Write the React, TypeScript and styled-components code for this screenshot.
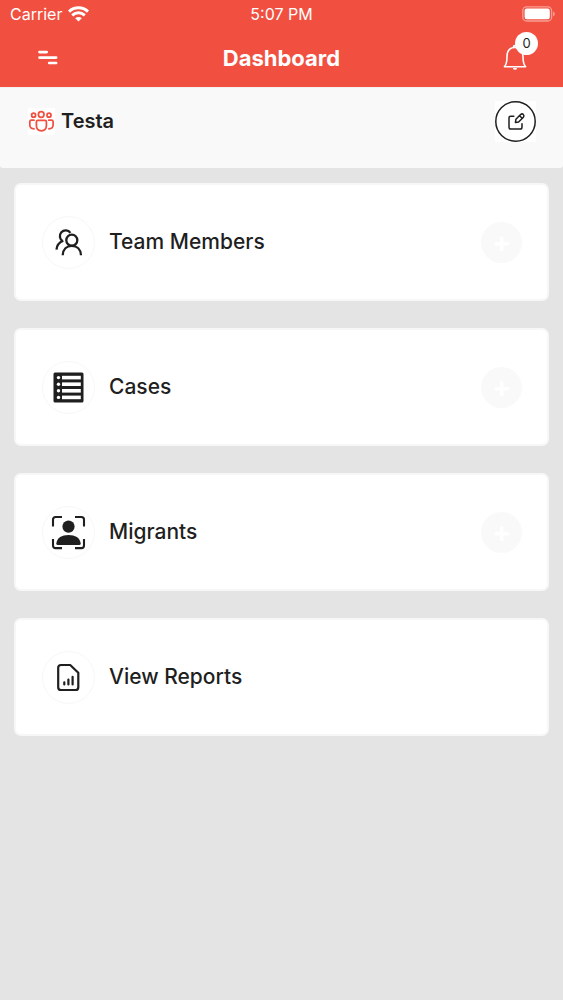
import React from "react";
import styled, { createGlobalStyle } from "styled-components";

const ink = "#1f1f1f";
const brand = "#f15040";

const GlobalStyle = createGlobalStyle`
  *, *::before, *::after { box-sizing: border-box; }
  body {
    margin: 0;
    background: #e4e4e4;
    color: ${ink};
    font-family: Inter, "Liberation Sans", sans-serif;
  }
  button { font: inherit; color: inherit; border: 0; padding: 0; background: none; cursor: pointer; }
  svg { display: block; }
`;

const Header = styled.header`
  background: ${brand};
  color: #fff;
`;

const StatusBar = styled.div`
  display: grid;
  grid-template-columns: 1fr auto 1fr;
  align-items: center;
  height: 28px;
  padding: 0 8px;
  font-size: 16px;
  line-height: 28px;
`;

const Carrier = styled.div`
  display: flex;
  align-items: center;
  gap: 6px;
  padding-left: 2px;
`;

const Battery = styled.div`
  display: flex;
  justify-content: flex-end;
`;

const NavBar = styled.nav`
  display: grid;
  grid-template-columns: 1fr auto 1fr;
  align-items: center;
  height: 59px;
  padding: 0 36px;
`;

const Title = styled.h1`
  margin: 0;
  font-size: 22px;
  line-height: 26px;
  font-weight: 700;
`;

const MenuButton = styled.button`
  width: 24px;
  height: 24px;
`;

const BellButton = styled.button`
  position: relative;
  justify-self: end;
  width: 24px;
  height: 28px;
`;

const Badge = styled.span`
  position: absolute;
  top: -12px;
  left: 12px;
  width: 23px;
  height: 23px;
  border-radius: 50%;
  background: #fff;
  color: ${ink};
  font-size: 13px;
  line-height: 23px;
  text-align: center;
`;

const TeamBar = styled.section`
  display: flex;
  align-items: flex-start;
  justify-content: space-between;
  padding: 13px 27px 26px 28px;
  background: #f9f9f9;
  border-top: 1px solid #f5f1f0;
  border-radius: 0 0 3px 3px;
`;

const TeamName = styled.div`
  display: flex;
  align-items: center;
  gap: 6px;
  height: 40px;
`;

const TeamIcon = styled.span`
  width: 27px;
  height: 27px;
  background: #fff;
`;

const TeamHeading = styled.h2`
  margin: 0;
  font-size: 20px;
  line-height: 28px;
  font-weight: 600;
`;

const EditButton = styled.button`
  width: 41px;
  height: 41px;
  background: #fff;
`;

const CardList = styled.main`
  display: flex;
  flex-direction: column;
  gap: 27px;
  padding: 15px 14px;
`;

const Card = styled.section`
  display: flex;
  align-items: center;
  gap: 14px;
  height: 118px;
  padding: 0 25px 0 26px;
  border: 2px solid #f7f7f7;
  border-radius: 7px;
  background: #fff;
`;

const IconCircle = styled.span`
  display: grid;
  place-items: center;
  flex: none;
  width: 53px;
  height: 53px;
  border: 1px solid #f7f7f7;
  border-radius: 50%;
`;

const CardTitle = styled.h3`
  flex: 1;
  margin: 0;
  font-size: 21px;
  line-height: 30px;
  font-weight: 500;
`;

const AddButton = styled.button`
  display: grid;
  place-items: center;
  flex: none;
  width: 41px;
  height: 41px;
  border-radius: 50%;
  background: #f9f9f9;
`;

const WifiIcon = () => (
  <svg width="21" height="16" viewBox="0 0 21 16" fill="none" stroke="#fff" strokeWidth="3" aria-hidden="true">
    <path d="M1 5.6C6.4.6 14.6.6 20 5.6" />
    <path d="M4.2 9.4C8 6 13 6 16.8 9.4" />
    <path d="M7.2 12.2C9 10.5 12 10.5 13.8 12.2L10.5 15.4Z" fill="#fff" stroke="none" />
  </svg>
);

const BatteryIcon = () => (
  <svg width="33" height="16" viewBox="0 0 33 16" aria-hidden="true">
    <rect x=".8" y=".8" width="28.8" height="14.2" rx="3.8" fill="none" stroke="#fff" strokeOpacity=".45" strokeWidth="1.3" />
    <rect x="2.6" y="2.6" width="25.2" height="10.6" rx="2.2" fill="#fff" />
    <path d="M31.2 5.6Q32.8 6.3 32.8 7.9T31.2 10.2Z" fill="#fff" fillOpacity=".5" />
  </svg>
);

const MenuIcon = () => (
  <svg width="24" height="24" viewBox="0 0 24 24" stroke="#fff" strokeWidth="2.7" strokeLinecap="round" aria-hidden="true">
    <path d="M3.5 6.1h7.2M3.5 11.6h16.6M13.2 17h6.9" />
  </svg>
);

const BellIcon = () => (
  <svg width="24" height="28" viewBox="0 0 24 28" fill="none" stroke="#fff" strokeWidth="1.6" strokeLinejoin="round" aria-hidden="true">
    <path d="M1.4 22.7C3.7 20.2 4 17.2 4 12.7C4 6.3 6.7 3.5 12 3.5S20 6.3 20 12.7C20 17.2 20.3 20.2 22.6 22.7Z" />
    <path d="M10.4 3.2a1.6 1.6 0 0 1 3.2 0" />
    <path d="M10 23.9h4a2 1.9 0 0 1-4 0Z" fill="#fff" stroke="none" />
  </svg>
);

const GroupIcon = () => (
  <svg width="27" height="27" viewBox="0 0 27 27" fill="none" stroke={brand} strokeWidth="1.75" strokeLinecap="round" strokeLinejoin="round" aria-hidden="true">
    <circle cx="13.2" cy="6.5" r="2.8" />
    <circle cx="5.6" cy="7.2" r="2" />
    <circle cx="21" cy="7.2" r="2" />
    <path d="M9.8 12.3H17A1.4 1.4 0 0 1 18.4 13.7V17.6C18.4 20.8 16.3 22.8 13.4 22.8S8.4 20.8 8.4 17.6V13.7A1.4 1.4 0 0 1 9.8 12.3Z" />
    <path d="M6 12.2H3.3Q1.8 12.2 1.8 13.7V17.2Q2 20.6 6 20.8M20.8 12.2H23.6Q25.1 12.2 25.1 13.7V17.2Q24.9 20.6 20.9 20.8" />
  </svg>
);

const EditIcon = () => (
  <svg width="41" height="41" viewBox="0 0 41 41" fill="none" stroke={ink} strokeWidth="1.5" strokeLinecap="round" strokeLinejoin="round" aria-hidden="true">
    <circle cx="20.5" cy="20.5" r="19.7" />
    <path d="M18.8 15.3H15.7Q14 15.3 14 17V26.2Q14 28 15.8 28H25.2Q27 28 27 26.2V22.7" />
    <path d="M20.4 21.5L20.9 18.3L25.6 13.5Q27.1 12.3 28.3 13.5T28.4 16.3L23.6 21Z" />
    <path d="M24.6 14.7L27.2 17.3" />
  </svg>
);

const MembersIcon = () => (
  <svg width="37" height="37" viewBox="0 0 37 37" fill="none" stroke={ink} strokeWidth="2.3" aria-hidden="true">
    <circle cx="21.8" cy="16.2" r="5.5" />
    <path d="M12.7 31.2C13 25.3 16.7 21.9 21.8 21.9S30.7 25.3 31 31.2" />
    <path d="M20.4 8.8A5.8 5.8 0 1 0 12.8 17.2M13.3 16.8Q7 19.2 6.5 25.6" />
  </svg>
);

const CasesIcon = () => (
  <svg width="37" height="37" viewBox="0 0 37 37" aria-hidden="true">
    <rect x="3.5" y="3.5" width="30" height="30" rx="1.5" fill={ink} />
    {[8.6, 15.2, 21.8, 28.4].map((y) => (
      <g key={y} fill="#fff">
        <circle cx="8.5" cy={y} r="1.7" />
        <rect x="12" y={y - 1.8} width="18.8" height="3.6" />
      </g>
    ))}
  </svg>
);

const MigrantIcon = () => (
  <svg width="37" height="37" viewBox="0 0 37 37" fill={ink} aria-hidden="true">
    <path d="M3 12.4V5.6Q3 3 5.6 3H12M25 3H31.4Q34 3 34 5.6V12.4M34 25V31.5Q34 34.1 31.4 34.1H25M12 34.1H5.6Q3 34.1 3 31.5V25" fill="none" stroke={ink} strokeWidth="2.1" />
    <circle cx="18.5" cy="12.6" r="6.1" />
    <path d="M6.3 29.5C7 23.7 11.8 21 18.5 21S30 23.7 30.7 29.5Q30.7 31 29.2 31H7.8Q6.3 31 6.3 29.5Z" />
  </svg>
);

const ReportIcon = () => (
  <svg width="37" height="37" viewBox="0 0 37 37" fill="none" stroke={ink} strokeWidth="2.2" strokeLinecap="round" strokeLinejoin="round" aria-hidden="true">
    <path d="M11 6H20.2L28.3 13.8V28.2Q28.3 31 25.5 31H11Q8.2 31 8.2 28.2V8.8Q8.2 6 11 6Z" />
    <path d="M14.3 23.3V25.4M18.4 20.6V25.4M22.6 17.8V25.4" />
  </svg>
);

const PlusIcon = () => (
  <svg width="17" height="17" viewBox="0 0 17 17" stroke="#fff" strokeWidth="3.4" strokeLinecap="round" aria-hidden="true">
    <path d="M8.8 4V15.6M3 9.8H14.6" />
  </svg>
);

const sections = [
  { title: "Team Members", Icon: MembersIcon, canAdd: true },
  { title: "Cases", Icon: CasesIcon, canAdd: true },
  { title: "Migrants", Icon: MigrantIcon, canAdd: true },
  { title: "View Reports", Icon: ReportIcon, canAdd: false },
];

export default function App() {
  return (
    <>
      <GlobalStyle />
      <Header>
        <StatusBar>
          <Carrier>
            Carrier
            <WifiIcon />
          </Carrier>
          <span>5:07 PM</span>
          <Battery>
            <BatteryIcon />
          </Battery>
        </StatusBar>
        <NavBar>
          <MenuButton aria-label="Open menu">
            <MenuIcon />
          </MenuButton>
          <Title>Dashboard</Title>
          <BellButton aria-label="Notifications">
            <BellIcon />
            <Badge>0</Badge>
          </BellButton>
        </NavBar>
      </Header>
      <TeamBar>
        <TeamName>
          <TeamIcon>
            <GroupIcon />
          </TeamIcon>
          <TeamHeading>Testa</TeamHeading>
        </TeamName>
        <EditButton aria-label="Edit team">
          <EditIcon />
        </EditButton>
      </TeamBar>
      <CardList>
        {sections.map(({ title, Icon, canAdd }) => (
          <Card key={title}>
            <IconCircle>
              <Icon />
            </IconCircle>
            <CardTitle>{title}</CardTitle>
            {canAdd && (
              <AddButton aria-label={`Add to ${title}`}>
                <PlusIcon />
              </AddButton>
            )}
          </Card>
        ))}
      </CardList>
    </>
  );
}
